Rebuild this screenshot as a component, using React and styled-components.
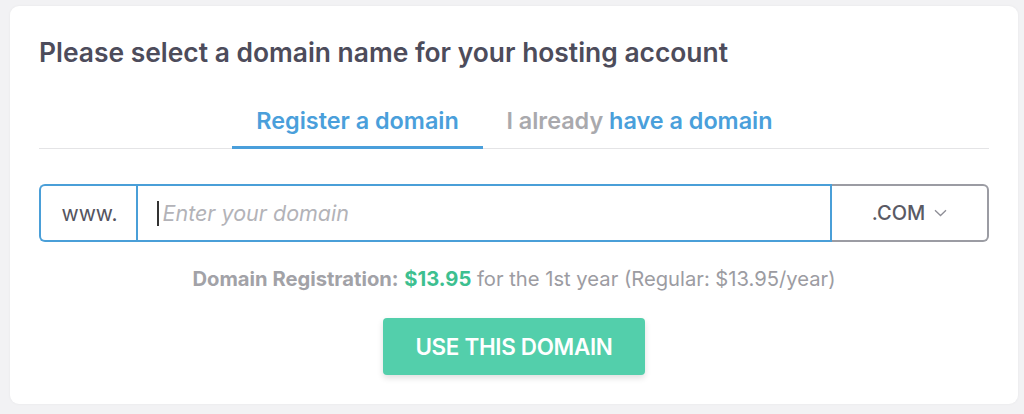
import React from "react";
import styled, { createGlobalStyle } from "styled-components";

const GlobalStyle = createGlobalStyle`
  html, body {
    margin: 0;
    padding: 0;
    background: #f2f2f4;
    font-family: Inter, "Noto Sans", sans-serif;
  }
`;

const Page = styled.div`
  width: 1024px;
  height: 414px;
  padding: 6px 6px 10px 10px;
  box-sizing: border-box;
`;

const Card = styled.div`
  height: 100%;
  background: #fff;
  border-radius: 9px;
  box-shadow: 0 0 3px rgba(0, 0, 0, 0.05);
  padding: 30px 29px 0 29px;
  box-sizing: border-box;
`;

const Title = styled.h2`
  margin: 0;
  font-size: 26.4px;
  font-weight: 600;
  color: #4d4c5b;
  line-height: 32px;
`;

const Tabs = styled.div`
  margin-top: 39px;
  display: flex;
  justify-content: center;
  border-bottom: 1px solid #e4e4e6;
`;

const Tab = styled.div`
  width: ${(p) => p.width}px;
  text-align: center;
  font-size: 23.4px;
  font-weight: 600;
  padding: 0 0 11px;
  line-height: 28px;
  color: #a9a9ad;
  border-bottom: 3px solid ${(p) => (p.active ? "#4a9fdb" : "transparent")};
  margin-bottom: -1px;
`;

const Blue = styled.span`
  color: #4a9fdb;
`;

const Group = styled.div`
  margin-top: 35px;
  display: flex;
  height: 58px;
`;

const Prefix = styled.div`
  width: 97px;
  box-sizing: border-box;
  border: 2px solid #4a9fd8;
  border-right: none;
  border-radius: 6px 0 0 6px;
  display: flex;
  align-items: center;
  justify-content: center;
  font-size: 21px;
  color: #55555f;
  padding-left: 2px;
`;

const Field = styled.div`
  flex: 1;
  border: 2px solid #4a9fd8;
  display: flex;
  align-items: center;
  padding-left: 19px;
`;

const Caret = styled.span`
  width: 1.5px;
  height: 25px;
  background: #333;
  margin-right: 4px;
`;

const Placeholder = styled.span`
  font-size: 21.5px;
  font-style: italic;
  color: #b3b3b8;
`;

const Select = styled.div`
  width: 157px;
  box-sizing: border-box;
  border: 2px solid #9b9ca3;
  border-left: none;
  border-radius: 0 6px 6px 0;
  display: flex;
  align-items: center;
  justify-content: center;
  gap: 9px;
  font-size: 20px;
  font-weight: 500;
  color: #5a5a64;
`;

const Price = styled.p`
  margin: 25px 0 0;
  text-align: center;
  font-size: 20.2px;
  line-height: 24px;
  color: #9c9ca2;
`;

const Bold = styled.b`
  font-weight: 700;
  color: ${(p) => p.color || "#a2a2a7"};
`;

const Actions = styled.div`
  display: flex;
  justify-content: center;
  margin-top: 27px;
`;

const Button = styled.button`
  width: 262px;
  height: 57px;
  border: none;
  border-radius: 4px;
  background: #53cfab;
  color: #fff;
  font-family: Inter, "Noto Sans", sans-serif;
  font-size: 22.4px;
  font-weight: 600;
  letter-spacing: -0.3px;
  box-shadow: 0 3px 6px rgba(0, 0, 0, 0.13);
`;

export default function App() {
  return (
    <>
      <GlobalStyle />
      <Page>
        <Card>
          <Title>Please select a domain name for your hosting account</Title>
          <Tabs>
            <Tab active width={251}>
              <Blue>Register a domain</Blue>
            </Tab>
            <Tab width={313}>
              I already <Blue>have a domain</Blue>
            </Tab>
          </Tabs>
          <Group>
            <Prefix>www.</Prefix>
            <Field>
              <Caret />
              <Placeholder>Enter your domain</Placeholder>
            </Field>
            <Select>
              .COM
              <svg width="13" height="8" viewBox="0 0 13 8" fill="none">
                <path d="M1 1.2l5.5 5.3L12 1.2" stroke="#8e8e96" strokeWidth="1.3" />
              </svg>
            </Select>
          </Group>
          <Price>
            <Bold>Domain Registration:</Bold> <Bold color="#3dbf90">$13.95</Bold> for the 1st
            year (Regular: $13.95/year)
          </Price>
          <Actions>
            <Button>USE THIS DOMAIN</Button>
          </Actions>
        </Card>
      </Page>
    </>
  );
}
